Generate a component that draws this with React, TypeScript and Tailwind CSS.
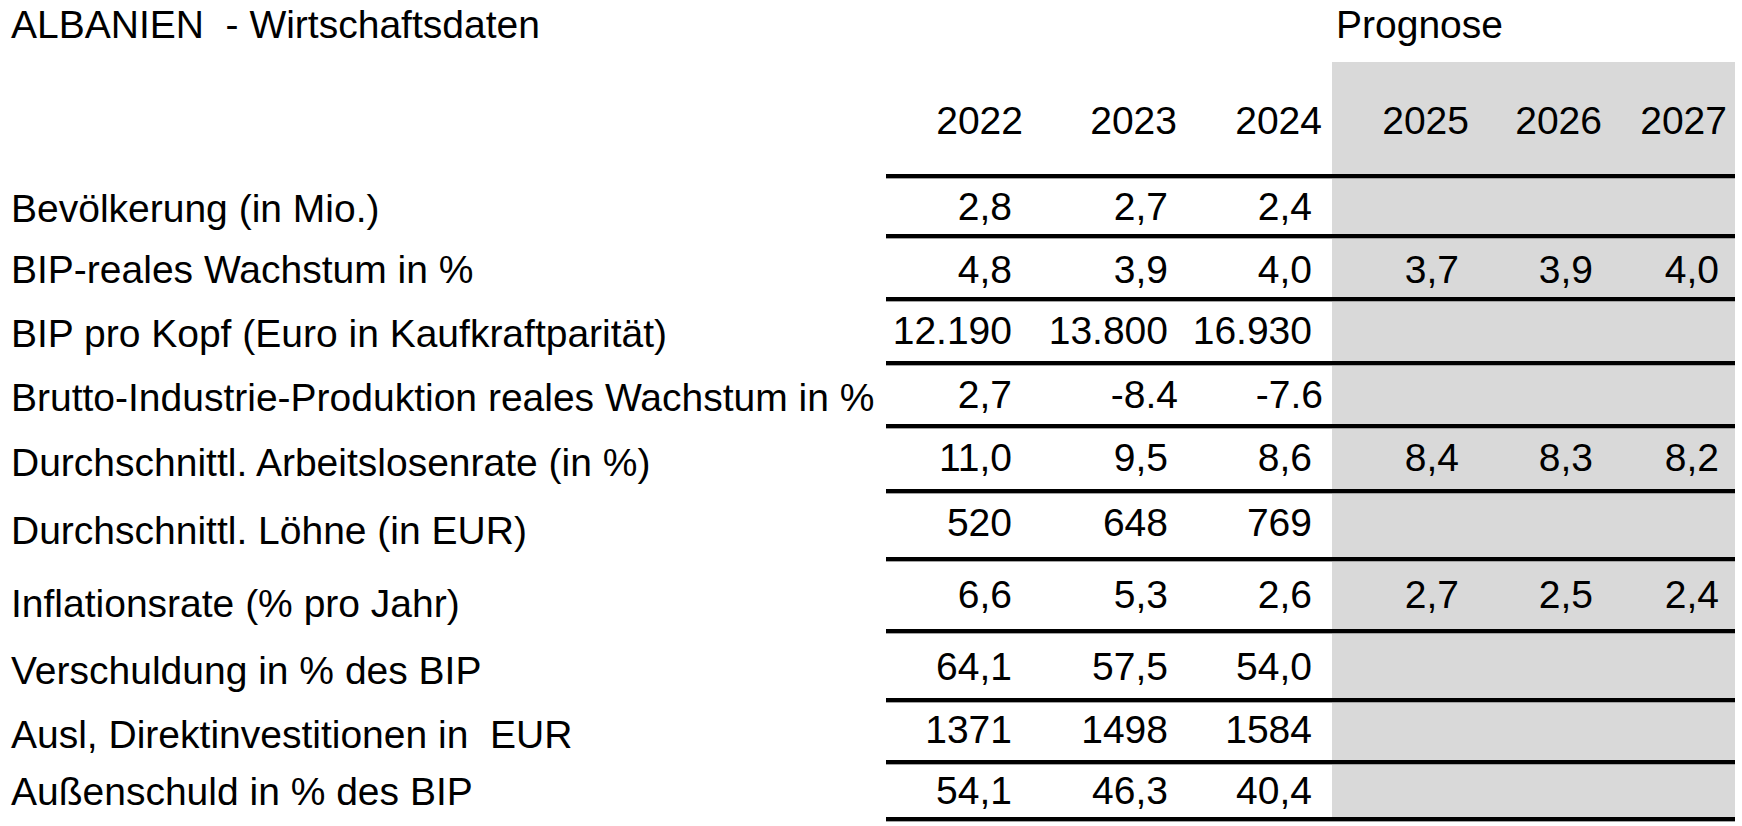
import React from "react";

type Col = { w: string; yr: string; num: string; txt: string; gray: boolean };

const cols: Col[] = [
  { w: "w-[141px]", yr: "pr-[4px]", num: "pr-[15px]", txt: "pr-[4px]", gray: false },
  { w: "w-[154px]", yr: "pr-[4px]", num: "pr-[13px]", txt: "pr-[3px]", gray: false },
  { w: "w-[151px]", yr: "pr-[10px]", num: "pr-[20px]", txt: "pr-[9px]", gray: false },
  { w: "w-[141px]", yr: "pr-[4px]", num: "pr-[14px]", txt: "pr-[4px]", gray: true },
  { w: "w-[133px]", yr: "pr-[4px]", num: "pr-[13px]", txt: "pr-[4px]", gray: true },
  { w: "w-[129px]", yr: "pr-[8px]", num: "pr-[16px]", txt: "pr-[8px]", gray: true },
];

const years = ["2022", "2023", "2024", "2025", "2026", "2027"];

type Row = { label: string; h: string; lpt: string; vpt: string; vals: string[] };

const rows: Row[] = [
  { label: "Bevölkerung (in Mio.)", h: "h-[60px]", lpt: "pt-[15px]", vpt: "pt-[8px]", vals: ["2,8", "2,7", "2,4", "", "", ""] },
  { label: "BIP-reales Wachstum in %", h: "h-[63px]", lpt: "pt-[16px]", vpt: "pt-[11px]", vals: ["4,8", "3,9", "4,0", "3,7", "3,9", "4,0"] },
  { label: "BIP pro Kopf (Euro in Kaufkraftparität)", h: "h-[64px]", lpt: "pt-[17px]", vpt: "pt-[9px]", vals: ["12.190", "13.800", "16.930", "", "", ""] },
  { label: "Brutto-Industrie-Produktion reales Wachstum in %", h: "h-[63px]", lpt: "pt-[17px]", vpt: "pt-[9px]", vals: ["2,7", "-8.4", "-7.6", "", "", ""] },
  { label: "Durchschnittl. Arbeitslosenrate (in %)", h: "h-[65px]", lpt: "pt-[19px]", vpt: "pt-[9px]", vals: ["11,0", "9,5", "8,6", "8,4", "8,3", "8,2"] },
  { label: "Durchschnittl. Löhne (in EUR)", h: "h-[68px]", lpt: "pt-[22px]", vpt: "pt-[9px]", vals: ["520", "648", "769", "", "", ""] },
  { label: "Inflationsrate (% pro Jahr)", h: "h-[72px]", lpt: "pt-[27px]", vpt: "pt-[13px]", vals: ["6,6", "5,3", "2,6", "2,7", "2,5", "2,4"] },
  { label: "Verschuldung in % des BIP", h: "h-[69px]", lpt: "pt-[22px]", vpt: "pt-[13px]", vals: ["64,1", "57,5", "54,0", "", "", ""] },
  { label: "Ausl, Direktinvestitionen in  EUR", h: "h-[62px]", lpt: "pt-[17px]", vpt: "pt-[7px]", vals: ["1371", "1498", "1584", "", "", ""] },
  { label: "Außenschuld in % des BIP", h: "h-[57px]", lpt: "pt-[12px]", vpt: "pt-[6px]", vals: ["54,1", "46,3", "40,4", "", "", ""] },
];

function Rule() {
  return <div className="h-[5px] border-t-[4px] border-black bg-[#a3a3a3]" />;
}

export default function App() {
  return (
    <div className="w-[1742px] h-[826px] bg-white text-black font-['Liberation_Sans',Arial,sans-serif] text-[39px] leading-none overflow-hidden">
      {/* title row */}
      <div className="flex h-[62px]">
        <div className="w-[886px] pl-[11px] pt-[5px] whitespace-pre">ALBANIEN  - Wirtschaftsdaten</div>
        <div className="w-[849px] pl-[450px] pt-[5px]">Prognose</div>
      </div>
      {/* years row */}
      <div className="flex h-[112px]">
        <div className="w-[886px]" />
        <div className="flex w-[849px]">
          {cols.map((c, i) => (
            <div key={i} className={`${c.w} ${c.gray ? "bg-[#d9d9d9]" : ""} ${c.yr} pt-[39px] text-right`}>
              {years[i]}
            </div>
          ))}
        </div>
      </div>
      {/* data rows */}
      {rows.map((r, ri) => (
        <div key={ri} className={`flex ${r.h}`}>
          <div className={`w-[886px] pl-[11px] ${r.lpt} whitespace-pre`}>{r.label}</div>
          <div className="flex w-[849px] flex-col">
            <Rule />
            <div className="flex flex-1">
              {cols.map((c, i) => {
                const v = r.vals[i];
                const isText = v.startsWith("-");
                return (
                  <div
                    key={i}
                    className={`${c.w} ${c.gray ? "bg-[#d9d9d9]" : ""} ${isText ? c.txt : c.num} ${r.vpt} text-right`}
                  >
                    {v}
                  </div>
                );
              })}
            </div>
          </div>
        </div>
      ))}
      <div className="flex">
        <div className="w-[886px]" />
        <div className="w-[849px]">
          <Rule />
        </div>
      </div>
    </div>
  );
}
